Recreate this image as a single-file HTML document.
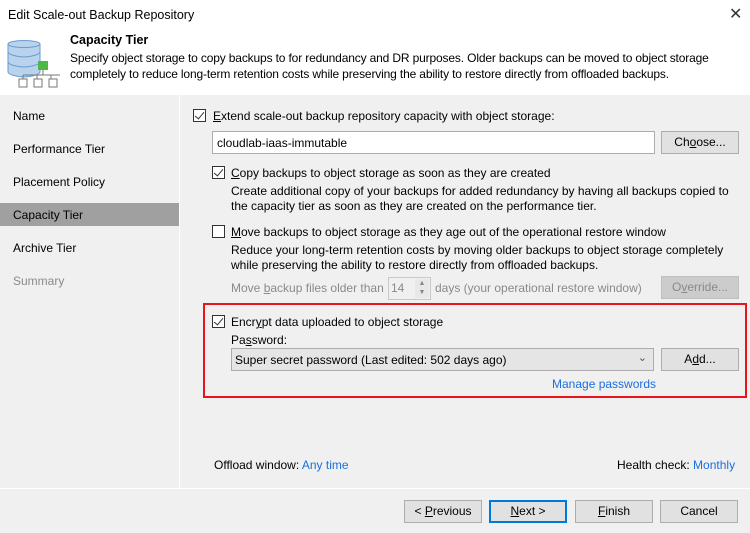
<!DOCTYPE html>
<html><head><style>
*{margin:0;padding:0;box-sizing:border-box}
body{width:750px;height:533px;background:#f0f0f0;font-family:"Liberation Sans",sans-serif;font-size:12px;color:#000;position:relative;overflow:hidden}
.a{position:absolute;white-space:nowrap}
.cb{position:absolute;width:13px;height:13px;border:1px solid #333;background:#fff}
.cb.k::after{content:"";position:absolute;left:3px;top:0px;width:4px;height:8px;border:solid #333;border-width:0 1.5px 1.5px 0;transform:rotate(40deg)}
.btn{position:absolute;background:#e1e1e1;border:1px solid #adadad;text-align:center;line-height:21px}
.g{color:#8a8a8a}
.lnk{color:#1a6fe0}
u{text-decoration:underline}
</style></head><body>
<div class="a" style="left:0;top:0;width:750px;height:95px;background:#fff"></div>
<div class="a" style="left:8px;top:8px;font-size:12.5px">Edit Scale-out Backup Repository</div>
<div class="a" style="left:729px;top:4px;font-size:16px;color:#333">✕</div>
<svg class="a" style="left:6px;top:40px" width="54" height="50">
<g fill="#b9d3ee" stroke="#6a9acb" stroke-width="1">
<path d="M2 22v10c0 3 12 5 16 5s16-2 16-5V22"/><path d="M2 12v10c0 3 12 5 16 5s16-2 16-5V12"/>
<path d="M2 4v8c0 3 12 5 16 5s16-2 16-5V4"/><ellipse cx="18" cy="4" rx="16" ry="3.5"/></g>
<rect x="32" y="21" width="10" height="9" fill="#4cb848"/>
<path d="M37 30v5M17 35h40M17 35v4M31 35v4M45 35v4" stroke="#777" fill="none"/>
<g fill="#fff" stroke="#777"><rect x="13" y="39" width="8" height="8"/><rect x="28" y="39" width="8" height="8"/><rect x="43" y="39" width="8" height="8"/></g>
</svg>
<div class="a" style="left:70px;top:33px;font-weight:bold;font-size:12.5px">Capacity Tier</div>
<div class="a" style="left:70px;top:51px;font-size:12px;letter-spacing:-0.15px">Specify object storage to copy backups to for redundancy and DR purposes. Older backups can be moved to object storage</div>
<div class="a" style="left:70px;top:67px;font-size:12px;letter-spacing:-0.15px">completely to reduce long-term retention costs while preserving the ability to restore directly from offloaded backups.</div>
<div class="a" style="left:179px;top:95px;width:1px;height:393px;background:#fff"></div>
<div class="a" style="left:0;top:488px;width:750px;height:1px;background:#fff"></div>
<div class="a" style="left:13px;top:109px">Name</div>
<div class="a" style="left:13px;top:142px">Performance Tier</div>
<div class="a" style="left:13px;top:175px">Placement Policy</div>
<div class="a" style="left:0;top:203px;width:179px;height:23px;background:#a0a0a0"></div>
<div class="a" style="left:13px;top:208px">Capacity Tier</div>
<div class="a" style="left:13px;top:241px">Archive Tier</div>
<div class="a g" style="left:13px;top:274px">Summary</div>

<div class="cb k" style="left:193px;top:109px"></div>
<div class="a" style="left:213px;top:109px"><u>E</u>xtend scale-out backup repository capacity with object storage:</div>
<div class="a" style="left:212px;top:131px;width:443px;height:23px;background:#fff;border:1px solid #abadb3;padding:4px 4px">cloudlab-iaas-immutable</div>
<div class="btn" style="left:661px;top:131px;width:78px;height:23px">Ch<u>o</u>ose...</div>
<div class="cb k" style="left:212px;top:166px"></div>
<div class="a" style="left:231px;top:166px"><u>C</u>opy backups to object storage as soon as they are created</div>
<div class="a" style="left:231px;top:184px">Create additional copy of your backups for added redundancy by having all backups copied to</div>
<div class="a" style="left:231px;top:199px">the capacity tier as soon as they are created on the performance tier.</div>
<div class="cb" style="left:212px;top:225px"></div>
<div class="a" style="left:231px;top:225px"><u>M</u>ove backups to object storage as they age out of the operational restore window</div>
<div class="a" style="left:231px;top:243px">Reduce your long-term retention costs by moving older backups to object storage completely</div>
<div class="a" style="left:231px;top:258px">while preserving the ability to restore directly from offloaded backups.</div>
<div class="a g" style="left:231px;top:281px">Move <u>b</u>ackup files older than</div>
<div class="a g" style="left:388px;top:277px;width:43px;height:23px;border:1px solid #c8c8c8;padding:3px 2px">14</div>
<div class="a" style="left:415px;top:279px;width:14px;height:19px;background:#e8e8e8;font-size:7px;color:#888;text-align:center;line-height:9px">▲<br>▼</div>
<div class="a g" style="left:435px;top:281px">days (your operational restore window)</div>
<div class="btn g" style="left:661px;top:276px;width:78px;height:23px;background:#ccc;border-color:#bfbfbf">O<u>v</u>erride...</div>

<div class="a" style="left:203px;top:303px;width:544px;height:95px;border:2px solid #e8141c"></div>
<div class="cb k" style="left:212px;top:315px"></div>
<div class="a" style="left:231px;top:315px">Encr<u>y</u>pt data uploaded to object storage</div>
<div class="a" style="left:231px;top:333px">Pa<u>s</u>sword:</div>
<div class="a" style="left:231px;top:348px;width:423px;height:23px;background:#e5e5e5;border:1px solid #acacac;padding:4px 3px">Super secret password (Last edited: 502 days ago)<span style="position:absolute;right:6px;top:2px;font-size:11px;color:#555">⌄</span></div>
<div class="btn" style="left:661px;top:348px;width:78px;height:23px">A<u>d</u>d...</div>
<div class="a lnk" style="left:552px;top:377px">Manage passwords</div>

<div class="a" style="left:214px;top:458px">Offload window: <span class="lnk">Any time</span></div>
<div class="a" style="left:617px;top:458px">Health check: <span class="lnk">Monthly</span></div>

<div class="btn" style="left:404px;top:500px;width:78px;height:23px">&lt; <u>P</u>revious</div>
<div class="btn" style="left:489px;top:500px;width:78px;height:23px;border:2px solid #0078d7;line-height:19px"><u>N</u>ext &gt;</div>
<div class="btn" style="left:575px;top:500px;width:78px;height:23px"><u>F</u>inish</div>
<div class="btn" style="left:660px;top:500px;width:78px;height:23px">Cancel</div>
</body></html>
